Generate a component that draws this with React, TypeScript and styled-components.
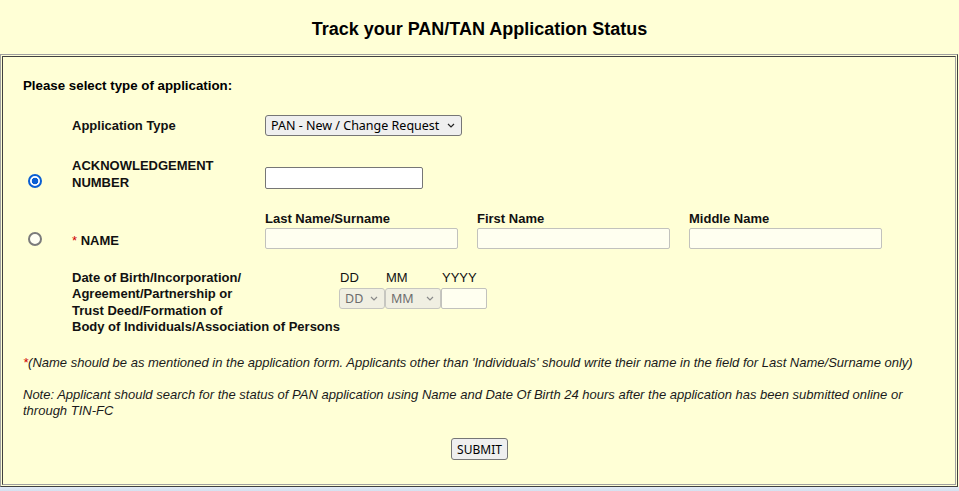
import styled, { createGlobalStyle } from "styled-components";

const GlobalStyle = createGlobalStyle`
  html, body {
    margin: 0;
    padding: 0;
  }
  body {
    background: #ffffd6;
    font-family: "Liberation Sans", Arial, sans-serif;
    color: #000;
  }
`;

const Page = styled.div`
  min-height: 491px;
  display: flex;
  flex-direction: column;
`;

const Title = styled.h2`
  margin: 0;
  padding: 18px 0 14px;
  text-align: center;
  font-size: 18px;
  line-height: 22px;
  font-weight: bold;
`;

// old-school table border: outset frame around an inset cell
const OuterFrame = styled.div`
  box-sizing: border-box;
  width: 958px;
  padding: 1px;
  border: 1px solid;
  border-color: #a0a0a0 #404040 #404040 #a0a0a0;
`;

const Frame = styled.div`
  padding: 21px 20px 24px;
  border: 1px solid;
  border-color: #404040 #a0a0a0 #a0a0a0 #404040;
`;

const BottomStrip = styled.div`
  flex: 1;
  background: linear-gradient(#e3ebf6, #d4e0f0);
`;

const Heading = styled.div`
  font-size: 13.3px;
  line-height: 16px;
  font-weight: bold;
`;

const FormRow = styled.div<{ $gap: number }>`
  display: grid;
  grid-template-columns: 49px 193px 1fr;
  margin-top: ${({ $gap }) => $gap}px;
`;

const Label = styled.div<{ $end?: boolean }>`
  font-size: 13px;
  line-height: 17px;
  font-weight: bold;
  color: #111;
  align-self: ${({ $end }) => ($end ? "end" : "center")};
`;

const Required = styled.span`
  color: #d00000;
  font-weight: normal;
`;

const Radio = styled.input.attrs({ type: "radio" })`
  appearance: none;
  box-sizing: border-box;
  width: 14px;
  height: 14px;
  margin: 0 0 3px 5px;
  align-self: end;
  border-radius: 50%;
  border: 2px solid #7b7b7b;
  background: #fffff4;

  &:checked {
    border-color: #0a5fd3;
    background: radial-gradient(circle, #0a5fd3 0 3px, #ffffff 3.6px);
  }
`;

const SelectWrap = styled.div<{ $width: number }>`
  position: relative;
  width: ${({ $width }) => $width}px;
  align-self: center;
`;

const Select = styled.select<{ $disabled?: boolean }>`
  appearance: none;
  box-sizing: border-box;
  width: 100%;
  height: 21px;
  margin: 0;
  padding: 0 0 0 5px;
  font-family: "Noto Sans", "Open Sans", sans-serif;
  font-size: 12.5px;
  color: ${({ $disabled }) => ($disabled ? "#6d6d6d" : "#000")};
  background: ${({ $disabled }) => ($disabled ? "#f0efe2" : "#efefef")};
  border: 1px solid ${({ $disabled }) => ($disabled ? "#c6c6c0" : "#767676")};
  border-radius: 3px;
`;

const Chevron = styled.svg<{ $disabled?: boolean }>`
  position: absolute;
  right: 7px;
  top: 8px;
  width: 8px;
  height: 5px;
  pointer-events: none;
  stroke: ${({ $disabled }) => ($disabled ? "#8a8a8a" : "#222")};
`;

const TextBox = styled.input<{ $width?: number; $soft?: boolean }>`
  box-sizing: border-box;
  width: ${({ $width }) => ($width ? `${$width}px` : "100%")};
  height: 21px;
  margin: 0;
  padding: 0 4px;
  font-family: "Liberation Sans", Arial, sans-serif;
  font-size: 13px;
  background: ${({ $soft }) => ($soft ? "#fffff0" : "#ffffff")};
  border: 1px solid ${({ $soft }) => ($soft ? "#c2c2bd" : "#767676")};
  border-radius: 2px;
`;

const AckBox = styled(TextBox)`
  height: 22px;
  align-self: end;
  margin-bottom: 2px;
`;

const NameFields = styled.div`
  display: grid;
  grid-template-columns: repeat(3, 193px);
  column-gap: 19px;
`;

const FieldLabel = styled.div`
  font-size: 13px;
  line-height: 16px;
  font-weight: bold;
  color: #111;
  margin-bottom: 1px;
`;

const DobRow = styled.div`
  display: grid;
  grid-template-columns: 49px 267px auto;
  margin-top: 21px;
`;

const DobLabel = styled.div`
  grid-column: 2;
  font-size: 13px;
  line-height: 16.3px;
  font-weight: bold;
  color: #111;
  white-space: nowrap;
`;

const DateGrid = styled.div`
  display: grid;
  grid-template-columns: 46px 56px 46px;
  grid-template-rows: 16px 20px;
  row-gap: 2px;
  align-self: start;
`;

const DatePart = styled.div`
  font-size: 13px;
  line-height: 16px;
  padding-left: 1px;
  color: #111;
`;

const Note = styled.p<{ $gap: number }>`
  margin: ${({ $gap }) => $gap}px 0 0;
  font-size: 13px;
  line-height: 16px;
  font-style: italic;
  color: #1a1a1a;
`;

const Actions = styled.div`
  display: flex;
  justify-content: center;
  margin-top: 19px;
  padding-left: 1px;
`;

const Button = styled.button`
  box-sizing: border-box;
  height: 22px;
  padding: 0 5px;
  font-family: "Noto Sans", "Open Sans", sans-serif;
  font-size: 12px;
  color: #000;
  background: #efefef;
  border: 1px solid #767676;
  border-radius: 3px;
`;

const ChevronIcon = ({ disabled }: { disabled?: boolean }) => (
  <Chevron $disabled={disabled} viewBox="0 0 8 5" fill="none" strokeWidth="1.2">
    <path d="M1 1l3 3 3-3" />
  </Chevron>
);

const App = () => {
  return (
    <Page>
      <GlobalStyle />
      <Title>Track your PAN/TAN Application Status</Title>
      <OuterFrame>
        <Frame>
          <Heading>Please select type of application:</Heading>

          <FormRow $gap={21}>
            <span />
            <Label>Application Type</Label>
            <SelectWrap $width={197}>
              <Select defaultValue="pan">
                <option value="pan">PAN - New / Change Request</option>
                <option value="tan">TAN - New / Change Request</option>
              </Select>
              <ChevronIcon />
            </SelectWrap>
          </FormRow>

          <FormRow $gap={21}>
            <Radio name="searchBy" defaultChecked />
            <Label>
              ACKNOWLEDGEMENT
              <br />
              NUMBER
            </Label>
            <AckBox $width={158} />
          </FormRow>

          <FormRow $gap={20}>
            <Radio name="searchBy" />
            <Label $end>
              <Required>* </Required>NAME
            </Label>
            <NameFields>
              <div>
                <FieldLabel>Last Name/Surname</FieldLabel>
                <TextBox $soft />
              </div>
              <div>
                <FieldLabel>First Name</FieldLabel>
                <TextBox $soft />
              </div>
              <div>
                <FieldLabel>Middle Name</FieldLabel>
                <TextBox $soft />
              </div>
            </NameFields>
          </FormRow>

          <DobRow>
            <DobLabel>
              Date of Birth/Incorporation/
              <br />
              Agreement/Partnership or
              <br />
              Trust Deed/Formation of
              <br />
              Body of Individuals/Association of Persons
            </DobLabel>
            <DateGrid>
              <DatePart>DD</DatePart>
              <DatePart>MM</DatePart>
              <DatePart>YYYY</DatePart>
              <SelectWrap $width={46}>
                <Select $disabled defaultValue="">
                  <option value="">DD</option>
                </Select>
                <ChevronIcon disabled />
              </SelectWrap>
              <SelectWrap $width={56}>
                <Select $disabled defaultValue="">
                  <option value="">MM</option>
                </Select>
                <ChevronIcon disabled />
              </SelectWrap>
              <TextBox $soft $width={46} />
            </DateGrid>
          </DobRow>

          <Note $gap={20}>
            <Required>*</Required>(Name should be as mentioned in the application form. Applicants
            other than 'Individuals' should write their name in the field for Last Name/Surname
            only)
          </Note>
          <Note $gap={16}>
            Note: Applicant should search for the status of PAN application using Name and Date Of
            Birth 24 hours after the application has been submitted online or through TIN-FC
          </Note>

          <Actions>
            <Button type="button">SUBMIT</Button>
          </Actions>
        </Frame>
      </OuterFrame>
      <BottomStrip />
    </Page>
  );
};

export default App;
